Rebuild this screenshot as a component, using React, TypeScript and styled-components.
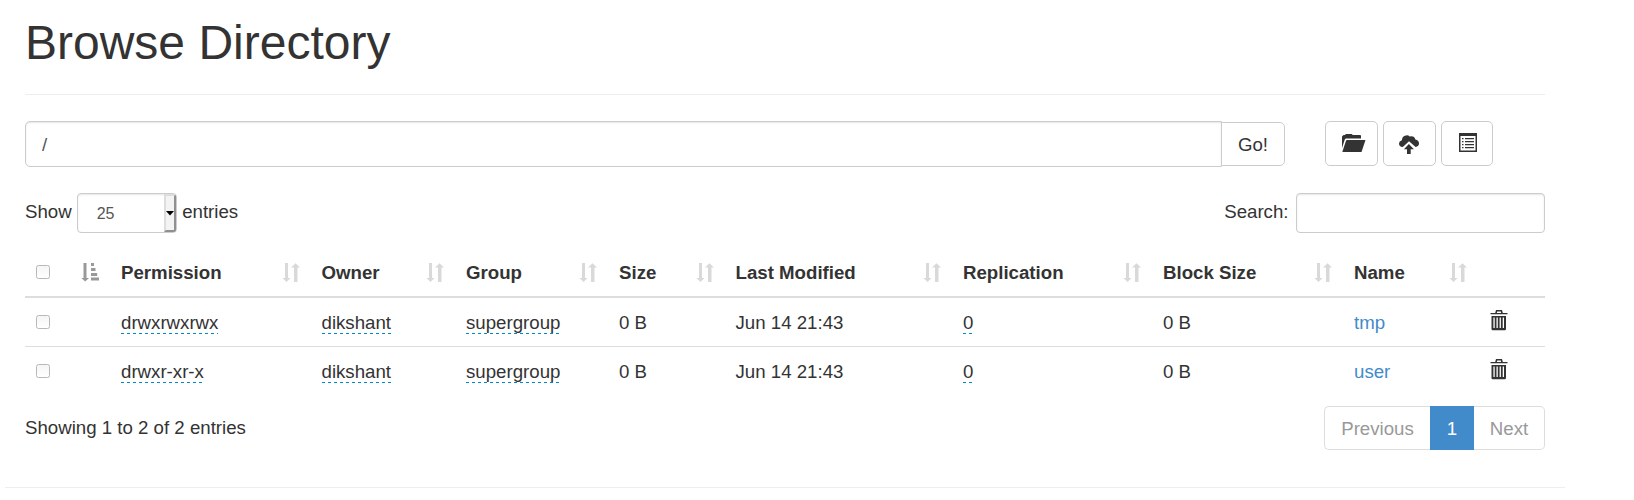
import React from 'react';
import styled, { createGlobalStyle, css } from 'styled-components';

const GlobalStyle = createGlobalStyle`
  *, *::before, *::after { box-sizing: border-box; }
  body {
    margin: 0;
    background: #fff;
    color: #333;
    font-family: "Liberation Sans", Arial, sans-serif;
    font-size: 18.667px;
    line-height: 27px;
  }
`;

const Page = styled.div`
  width: 1565px;
  padding-left: 5px;
`;

const Content = styled.main`
  padding: 0 20px;
`;

const Title = styled.h1`
  margin: 0;
  padding: 16px 0 25px;
  height: 95px;
  border-bottom: 1px solid #eee;
  font-size: 48px;
  font-weight: 500;
  line-height: 53px;
`;

const field = css`
  border: 1px solid #ccc;
  background: #fff;
  color: #555;
  font-family: inherit;
  box-shadow: inset 0 1px 2px rgba(0, 0, 0, 0.1);
  outline: none;
`;

const PathBar = styled.form`
  display: flex;
  align-items: flex-start;
  margin-top: 26px;
`;

const PathInput = styled.input`
  ${field}
  width: 1197px;
  height: 46px;
  padding: 2px 16px 0;
  border-radius: 5px 0 0 5px;
  font-size: 18.667px;
`;

const Button = styled.button<{ $width?: number }>`
  display: flex;
  align-items: center;
  justify-content: center;
  width: ${(p) => p.$width ?? 53}px;
  height: 45px;
  padding: 0;
  border: 1px solid #ccc;
  border-radius: 5px;
  background: #fff;
  color: #333;
  font: inherit;
`;

const GoButton = styled(Button)`
  height: 44px;
  margin: 1px 0 0 -1px;
  border-radius: 0 5px 5px 0;
`;

const Actions = styled.div`
  display: flex;
  gap: 5px;
  margin-left: 40px;
`;

const Controls = styled.div`
  display: flex;
  justify-content: space-between;
  height: 41px;
  margin-top: 26px;
  line-height: 37px;
`;

const Label = styled.label`
  display: flex;
`;

const Select = styled.span`
  ${field}
  display: flex;
  justify-content: space-between;
  width: 100px;
  height: 40px;
  margin: 0 5.500px 0 5px;
  padding-left: 19px;
  border-radius: 4px;
  font-size: 16px;
  line-height: 40px;
  overflow: hidden;
`;

const SelectArrow = styled.span`
  display: flex;
  align-items: center;
  justify-content: center;
  width: 12px;
  border: solid;
  border-width: 2px;
  border-color: #ddd #8f8f8f #8f8f8f #ddd;
  background: #f3f3f3;
`;

const SearchInput = styled.input`
  ${field}
  width: 249px;
  height: 40px;
  margin-left: 7.500px;
  border-radius: 4px;
  font-size: 16px;
`;

const Table = styled.table`
  width: 1520px;
  margin-top: 14px;
  table-layout: fixed;
  border-collapse: separate;
  border-spacing: 0;
`;

const Col = styled.col<{ $width: number }>`
  width: ${(p) => p.$width}px;
`;

const HeadCell = styled.th`
  height: 50px;
  padding: 0 12px 0 10px;
  border-bottom: 2px solid #ddd;
  text-align: left;
  vertical-align: top;
`;

const HeadInner = styled.div`
  display: flex;
  justify-content: space-between;
  padding-top: 11px;
  white-space: nowrap;
`;

const Cell = styled.td<{ $ruled: boolean }>`
  height: ${(p) => (p.$ruled ? 49 : 48)}px;
  padding: 11px 0 0 10px;
  border-top: ${(p) => (p.$ruled ? '1px solid #ddd' : '0')};
  vertical-align: top;
  white-space: nowrap;
`;

const Checkbox = styled.input.attrs({ type: 'checkbox' })`
  appearance: none;
  display: block;
  width: 14px;
  height: 14px;
  margin: 6px 0 0 1px;
  border: 1px solid #b8b8b8;
  border-radius: 2.5px;
  background: linear-gradient(#f5f5f5, #fff);
`;

const Editable = styled.span`
  display: inline-block;
  height: 25px;
  background: repeating-linear-gradient(90deg, #08c 0 3px, transparent 3px 6px) 0 100% / 100% 1px no-repeat;
`;

const Link = styled.a`
  color: #428bca;
  text-decoration: none;
`;

const Footer = styled.div`
  display: flex;
  justify-content: space-between;
  margin-top: 11px;
`;

const Info = styled.div`
  padding-top: 8px;
`;

const Pagination = styled.div`
  display: flex;
`;

const PageLink = styled.span<{ $active?: boolean; $width: number }>`
  width: ${(p) => p.$width}px;
  height: 44px;
  border: 1px solid ${(p) => (p.$active ? '#428bca' : '#ddd')};
  background: ${(p) => (p.$active ? '#428bca' : '#fff')};
  color: ${(p) => (p.$active ? '#fff' : '#999')};
  line-height: 43px;
  text-align: center;
  &:first-child { border-right: 0; border-radius: 5px 0 0 5px; }
  &:last-child { border-left: 0; border-radius: 0 5px 5px 0; }
`;

const Divider = styled.hr`
  height: 1px;
  margin: 37px 0 0;
  border: 0;
  background: #eee;
`;

const Icon = styled.svg<{ $dx?: number; $dy?: number }>`
  display: block;
  flex: none;
  fill: currentColor;
  margin: ${(p) => p.$dy ?? 0}px 0 0 ${(p) => p.$dx ?? 0}px;
`;

const SortIcon = styled(Icon)<{ $active?: boolean }>`
  color: ${(p) => (p.$active ? '#999' : '#d9d9d9')};
`;

const SortBoth = () => (
  <SortIcon width="18" height="19" viewBox="0 0 18 19" $dy={4}>
    <path d="M3 0h3v15h2.5L4.5 19 .5 15H3zM12 19V4.5H9L13.5.3 18 4.500h-2.500V19z" />
  </SortIcon>
);

const SortAsc = () => (
  <SortIcon width="18" height="19" viewBox="0 0 18 19" $active $dy={4}>
    <path d="M2.500 0h3v15H8L4.200 18.500.3 15h2.200zM10 0h3v3h-3zM10 5h4.500v3H10zM10 10h6.200v3H10zM10 14.500h8v3h-8z" />
  </SortIcon>
);

const FolderIcon = () => (
  <Icon width="24" height="19" viewBox="0 0 24 19" $dx={5}>
    <path d="M0 14V2.500L1.500 1H3l.8-1h6l.9 1H18q1 0 1 1v2.600H4.300Q3.200 4.600 2.800 5.600zM5 6h18.500l-4 12H.3L4 6.800Q4.300 6 5 6z" />
  </Icon>
);

const UploadIcon = () => (
  <Icon width="20" height="20" viewBox="0 0 20 20" $dx={-1} $dy={2}>
    <path d="M3.800 12Q0 11.600 0 8.500q0-2.400 2.900-3.300Q3 1 7 .4q2.200-.4 3.700 1Q15.500.500 16.400 4.600 20 5.400 20 8.600q0 3-3.400 3.400L10 6.200z" />
    <path d="M9.900 9l5 5.200h-3.200V19H8v-4.800H4.900z" />
  </Icon>
);

const ListIcon = () => (
  <Icon width="18" height="19" viewBox="0 0 18 19" $dx={1} $dy={-2}>
    <path fillRule="evenodd" d="M0 0h18v19H0zM1.500 3v14.500h15V3z" />
    <path d="M3 5h1.500v1.300H3zM6 5h9v1.300H6zM3 8h1.500v1.300H3zM6 8h9v1.300H6zM3 11h1.500v1.300H3zM6 11h9v1.300H6zM3 14h1.500v1.300H3zM6 14h9v1.300H6z" />
  </Icon>
);

const TrashIcon = () => (
  <Icon width="18" height="21" viewBox="0 0 18 21" $dx={1} $dy={1}>
    <path fillRule="evenodd" d="M5.200 3l.8-3h6l.8 3h4.700v1.300H.5V3zm1.600 0h4.400l-.4-1.600H7.200z" />
    <path fillRule="evenodd" d="M1.500 6H16v13q0 1.200-1.200 1.200H2.700q-1.200 0-1.200-1.200zM3.400 7.500V18h1.300V7.500zm3.100 0V18h1.300V7.500zm3.100 0V18h1.300V7.500zm3.100 0V18H14V7.500z" />
  </Icon>
);

const widths = [86, 200.5, 144.5, 153, 116.5, 227.5, 200, 191, 135, 66];
const headings = ['Permission', 'Owner', 'Group', 'Size', 'Last Modified', 'Replication', 'Block Size', 'Name'];
const entries = [
  { permission: 'drwxrwxrwx', name: 'tmp' },
  { permission: 'drwxr-xr-x', name: 'user' },
];

export default function App() {
  return (
    <Page>
      <GlobalStyle />
      <Content>
        <Title>Browse Directory</Title>
        <PathBar>
          <PathInput defaultValue="/" aria-label="Directory" />
          <GoButton type="button" $width={64}>Go!</GoButton>
          <Actions>
            <Button type="button" aria-label="Create directory"><FolderIcon /></Button>
            <Button type="button" aria-label="Upload files"><UploadIcon /></Button>
            <Button type="button" $width={52} aria-label="Cut and paste"><ListIcon /></Button>
          </Actions>
        </PathBar>
        <Controls>
          <Label>
            Show
            <Select>
              25
              <SelectArrow>
                <svg width="8" height="5" viewBox="0 0 8 5"><path d="M0 0h8L4 4.500z" /></svg>
              </SelectArrow>
            </Select>
            entries
          </Label>
          <Label>
            Search:
            <SearchInput />
          </Label>
        </Controls>
        <Table>
          <colgroup>
            {widths.map((w, i) => <Col key={i} $width={w} />)}
          </colgroup>
          <thead>
            <tr>
              <HeadCell><HeadInner><Checkbox /><SortAsc /></HeadInner></HeadCell>
              {headings.map((h) => (
                <HeadCell key={h}><HeadInner>{h}<SortBoth /></HeadInner></HeadCell>
              ))}
              <HeadCell />
            </tr>
          </thead>
          <tbody>
            {entries.map((e, i) => {
              const ruled = i > 0;
              return (
                <tr key={e.name}>
                  <Cell $ruled={ruled}><Checkbox /></Cell>
                  <Cell $ruled={ruled}><Editable>{e.permission}</Editable></Cell>
                  <Cell $ruled={ruled}><Editable>dikshant</Editable></Cell>
                  <Cell $ruled={ruled}><Editable>supergroup</Editable></Cell>
                  <Cell $ruled={ruled}>0 B</Cell>
                  <Cell $ruled={ruled}>Jun 14 21:43</Cell>
                  <Cell $ruled={ruled}><Editable>0</Editable></Cell>
                  <Cell $ruled={ruled}>0 B</Cell>
                  <Cell $ruled={ruled}><Link>{e.name}</Link></Cell>
                  <Cell $ruled={ruled}><TrashIcon /></Cell>
                </tr>
              );
            })}
          </tbody>
        </Table>
        <Footer>
          <Info>Showing 1 to 2 of 2 entries</Info>
          <Pagination>
            <PageLink $width={106}>Previous</PageLink>
            <PageLink $width={44} $active>1</PageLink>
            <PageLink $width={71}>Next</PageLink>
          </Pagination>
        </Footer>
      </Content>
      <Divider />
    </Page>
  );
}
